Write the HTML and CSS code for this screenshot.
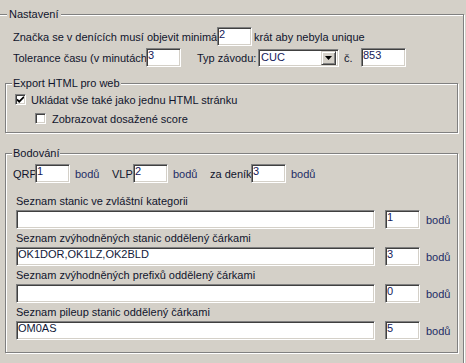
FILE: index.html
```html
<!DOCTYPE html>
<html lang="cs">
<head>
    <meta charset="UTF-8">
    <meta name="viewport" content="width=device-width, initial-scale=1.0">
    <title>Nastavení</title>
    <link rel="stylesheet" href="styles.css">
</head>
<body>
    <fieldset class="group group-main">
        <legend>Nastavení</legend>
        <div class="row row-unique">
            <span class="cut cut-unique">Značka se v denících musí objevit minimálně</span>
            <input class="edit edit-num" type="text" value="2">
            <span class="after">krát aby nebyla unique</span>
        </div>
        <div class="row row-tol">
            <span class="cut cut-tol">Tolerance času (v minutách)</span>
            <input class="edit edit-num" type="text" value="3">
            <span class="typ">Typ závodu:</span>
            <div class="combo">
                <span class="combo-value">CUC</span>
                <span class="combo-btn">
                    <svg width="7" height="4" viewBox="0 0 7 4"><path d="M0 0h7L3.5 4z" fill="#000"/></svg>
                </span>
            </div>
            <span class="cislo">č.</span>
            <input class="edit edit-cislo" type="text" value="853">
        </div>

        <fieldset class="group group-export">
            <legend>Export HTML pro web</legend>
            <label class="check">
                <span class="box">
                    <svg width="7" height="7" viewBox="0 0 7 7"><path d="M0 3.5l2.2 2.2L7 0.8" fill="none" stroke="#000" stroke-width="1.8"/></svg>
                </span>
                Ukládat vše také jako jednu HTML stránku
            </label>
            <label class="check check-sub">
                <span class="box"></span>
                Zobrazovat dosažené score
            </label>
        </fieldset>

        <fieldset class="group group-points">
            <legend>Bodování</legend>
            <div class="points">
                <span class="pt-label pt-qrp">QRP</span>
                <input class="edit edit-num" type="text" value="1">
                <span class="unit unit-gap">bodů</span>
                <span class="pt-label pt-vlp">VLP</span>
                <input class="edit edit-num" type="text" value="2">
                <span class="unit unit-gap">bodů</span>
                <span class="pt-label pt-denik">za deník</span>
                <input class="edit edit-num" type="text" value="3">
                <span class="unit">bodů</span>
            </div>

            <div class="list">
                <div class="list-label">Seznam stanic ve zvláštní kategorii</div>
                <div class="list-row">
                    <input class="edit edit-long" type="text" value="">
                    <input class="edit edit-num" type="text" value="1">
                    <span class="unit">bodů</span>
                </div>
                <div class="list-label">Seznam zvýhodněných stanic oddělený čárkami</div>
                <div class="list-row">
                    <input class="edit edit-long" type="text" value="OK1DOR,OK1LZ,OK2BLD">
                    <input class="edit edit-num" type="text" value="3">
                    <span class="unit">bodů</span>
                </div>
                <div class="list-label">Seznam zvýhodněných prefixů oddělený čárkami</div>
                <div class="list-row">
                    <input class="edit edit-long" type="text" value="">
                    <input class="edit edit-num" type="text" value="0">
                    <span class="unit">bodů</span>
                </div>
                <div class="list-label">Seznam pileup stanic oddělený čárkami</div>
                <div class="list-row">
                    <input class="edit edit-long" type="text" value="OM0AS">
                    <input class="edit edit-num" type="text" value="5">
                    <span class="unit">bodů</span>
                </div>
            </div>
        </fieldset>
    </fieldset>
</body>
</html>
```

FILE: styles.css
```css
* {
    box-sizing: border-box;
    margin: 0;
    padding: 0;
}
html, body {
    overflow: hidden;
}
body {
    width: 466px;
    height: 363px;
    font-family: "Liberation Sans", Arial, sans-serif;
    font-size: 11px;
    color: #10142c;
    background: #d4d0c8;
}

/* etched group boxes */
.group {
    min-width: 0;
    border: 1px solid #808080;
    box-shadow: 1px 1px 0 #fff, inset 1px 1px 0 #fff;
}
.group legend {
    line-height: 13px;
    padding: 0 1px;
    margin-left: 6px;
    background: #d4d0c8;
}
.group-main {
    width: 467px;
    margin: 8px 0 0 -3px;
    padding: 6px 5px 40px 7px;
}
.group-main > legend {
    padding: 0 2px;
    margin-left: 2px;
}
.group-export {
    margin-top: 10px;
    padding: 0 0 4px 0;
}
.group-points {
    margin-top: 14px;
    padding: 4px 0 12px 0;
}

/* rows */
.row, .points, .check, .list-row {
    display: flex;
    align-items: center;
    height: 19px;
    white-space: nowrap;
}
.row > *, .points > *, .check > *, .list-row > * {
    flex-shrink: 0;
}
.row {
    padding-left: 8px;
}
.row-tol {
    margin-top: 2px;
}
.cut {
    overflow: hidden;
}
.cut-unique {
    width: 204px;
}
.cut-tol {
    width: 133px;
}
.after {
    margin-left: 2px;
}
.typ {
    width: 61px;
    margin-left: 16px;
}
.cislo {
    width: 17px;
    margin-left: 5px;
}

/* sunken edits */
.edit {
    display: block;
    height: 19px;
    padding: 0 1px 5px;
    font: inherit;
    line-height: 12px;
    color: #14205a;
    background: #fff;
    border: 1px solid;
    border-color: #808080 #fff #fff #808080;
    box-shadow: inset 1px 1px 0 #404040, inset -1px -1px 0 #d4d0c8;
    outline: none;
}
.edit-num {
    width: 35px;
}
.edit-cislo {
    width: 45px;
}
.edit-long {
    width: 359px;
    color: #101838;
}

/* combo box */
.combo {
    display: flex;
    align-items: flex-start;
    width: 81px;
    height: 18px;
    background: #fff;
    border: 1px solid;
    border-color: #808080 #fff #fff #808080;
    box-shadow: inset 1px 1px 0 #404040, inset -1px -1px 0 #d4d0c8;
    padding: 1px 2px 2px 2px;
    color: #14205a;
}
.combo-value {
    flex: 1;
    line-height: 13px;
}
.combo-btn {
    display: flex;
    align-items: center;
    justify-content: center;
    width: 15px;
    height: 14px;
    background: #d4d0c8;
    border: 1px solid;
    border-color: #d4d0c8 #404040 #404040 #d4d0c8;
    box-shadow: inset 1px 1px 0 #fff, inset -1px -1px 0 #808080;
}

/* check boxes */
.check {
    padding-left: 9px;
}
.check-sub {
    padding-left: 29px;
}
.box {
    display: flex;
    align-items: center;
    justify-content: center;
    width: 11px;
    height: 11px;
    margin-right: 5px;
    background: #fff;
    border: 1px solid;
    border-color: #808080 #fff #fff #808080;
    box-shadow: inset 1px 1px 0 #404040, inset -1px -1px 0 #d4d0c8;
}
.check-sub .box {
    margin-right: 6px;
}

/* points */
.points {
    padding-left: 7px;
}
.pt-qrp {
    width: 22px;
}
.pt-vlp {
    width: 21px;
}
.pt-denik {
    width: 41px;
}
.unit {
    color: #1e2c66;
    padding-left: 5px;
}
.unit-gap {
    width: 42px;
}

.list {
    padding: 9px 0 0 10px;
}
.list-label {
    height: 18px;
    line-height: 18px;
}
.list-row {
    gap: 10px;
}
.list-row .unit {
    padding-left: 0;
    margin-left: -4px;
}
```
